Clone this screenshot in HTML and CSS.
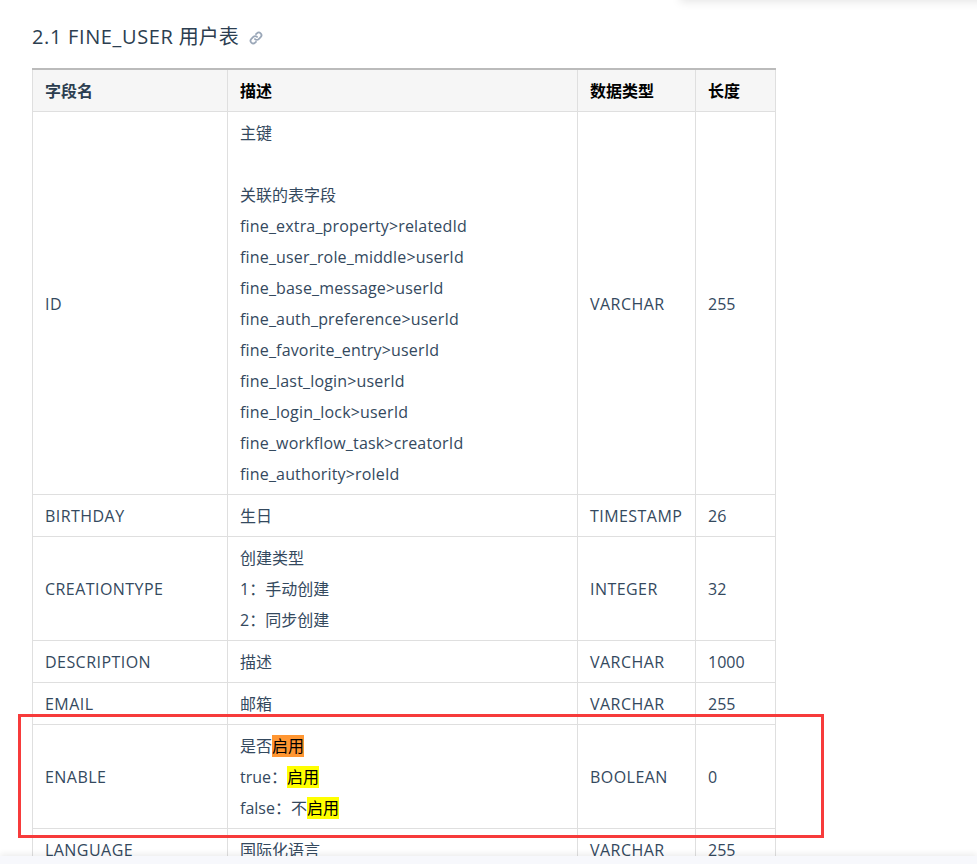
FILE: index.html
```html
<!DOCTYPE html>
<html lang="zh-CN">
<head>
<meta charset="utf-8">
<title>FINE_USER 用户表</title>
<link rel="stylesheet" href="styles.css">
</head>
<body>
<div class="top-shadow"></div>
<main class="content">
  <h3 class="heading"><span><span class="head-en">2.1 FINE_USER</span> 用户表</span>
    <svg class="anchor" viewBox="0 0 16 16" width="14" height="14" aria-hidden="true"><g fill="none" stroke="#9aa7b8" stroke-width="2" stroke-linecap="round"><path d="M6.8 9.2a3 3 0 0 0 4.3 0l2.2-2.2a3 3 0 0 0-4.3-4.3L8 3.7"/><path d="M9.2 6.8a3 3 0 0 0-4.3 0L2.7 9a3 3 0 0 0 4.3 4.3L8 12.3"/></g></svg>
  </h3>
  <table class="schema">
    <colgroup><col class="c1"><col class="c2"><col class="c3"><col class="c4"></colgroup>
    <thead>
      <tr><th class="muted">字段名</th><th>描述</th><th>数据类型</th><th>长度</th></tr>
    </thead>
    <tbody>
      <tr><td class="code">ID</td><td>主键<br><br>关联的表字段<br><span class="en">fine_extra_property&gt;relatedId</span><br><span class="en">fine_user_role_middle&gt;userId</span><br><span class="en">fine_base_message&gt;userId</span><br><span class="en">fine_auth_preference&gt;userId</span><br><span class="en">fine_favorite_entry&gt;userId</span><br><span class="en">fine_last_login&gt;userId</span><br><span class="en">fine_login_lock&gt;userId</span><br><span class="en">fine_workflow_task&gt;creatorId</span><br><span class="en">fine_authority&gt;roleId</span></td><td class="code">VARCHAR</td><td>255</td></tr>
      <tr><td class="code">BIRTHDAY</td><td>生日</td><td class="code">TIMESTAMP</td><td>26</td></tr>
      <tr><td class="code">CREATIONTYPE</td><td>创建类型<br>1：手动创建<br>2：同步创建</td><td class="code">INTEGER</td><td>32</td></tr>
      <tr><td class="code">DESCRIPTION</td><td>描述</td><td class="code">VARCHAR</td><td>1000</td></tr>
      <tr><td class="code">EMAIL</td><td>邮箱</td><td class="code">VARCHAR</td><td>255</td></tr>
      <tr><td class="code">ENABLE</td><td>是否<mark class="orange">启用</mark><br>true：<mark class="yellow">启用</mark><br>false：不<mark class="yellow">启用</mark></td><td class="code">BOOLEAN</td><td>0</td></tr>
      <tr><td class="code">LANGUAGE</td><td>国际化语言</td><td class="code">VARCHAR</td><td>255</td></tr>
    </tbody>
  </table>
</main>
<div class="callout"></div>
<div class="bottom-bar"></div>
</body>
</html>
```
FILE: styles.css
```css
html, body {
  margin: 0;
  height: 864px;
  overflow: hidden;
  background: #fff;
}
body {
  font-family: "Open Sans", "Noto Sans CJK SC", sans-serif;
  font-size: 16px;
  color: #34495e;
}
.content {
  padding: 22px 0 0 32px;
}
.heading {
  margin: 0 0 16px;
  font-size: 20px;
  font-weight: 400;
  line-height: 30px;
  color: #2c3e50;
  display: flex;
  align-items: center;
  gap: 10px;
}
.head-en {
  letter-spacing: 0.65px;
}
.anchor {
  margin-top: 1px;
}
.schema {
  border-collapse: collapse;
  table-layout: fixed;
  width: 743px;
  border-top: 2px solid #bbb;
  line-height: 31px;
}
.c1 { width: 195px; }
.c2 { width: 350px; }
.c3 { width: 118px; }
.c4 { width: 80px; }
.schema th, .schema td {
  border: 1px solid #dfdfdf;
  padding: 6px 12px 4px;
  text-align: left;
  vertical-align: middle;
}
.schema th {
  background: #f6f6f6;
  color: #000;
  font-weight: 700;
}
.schema th.muted {
  color: #2c3e50;
}
.schema thead tr:first-child th {
  border-top: 2px solid #bbb;
}
.schema td.code {
  letter-spacing: 0.45px;
}
.en {
  letter-spacing: 0.17px;
}
mark {
  color: #000;
}
.orange { background: #ff9632; }
.yellow { background: #ffff00; }
.callout {
  position: absolute;
  left: 18px;
  top: 714px;
  width: 800px;
  height: 118px;
  border: 3px solid #f73b3b;
}
.bottom-bar {
  position: fixed;
  left: 0;
  right: 0;
  bottom: 0;
  height: 8px;
  background: #f7f8fc;
  box-shadow: 0 -2px 6px rgba(0, 0, 0, 0.08);
}
.top-shadow {
  position: absolute;
  left: 680px;
  right: -40px;
  top: -20px;
  height: 20px;
  background: #fff;
  box-shadow: 0 2px 10px rgba(0, 0, 0, 0.1);
}
```
